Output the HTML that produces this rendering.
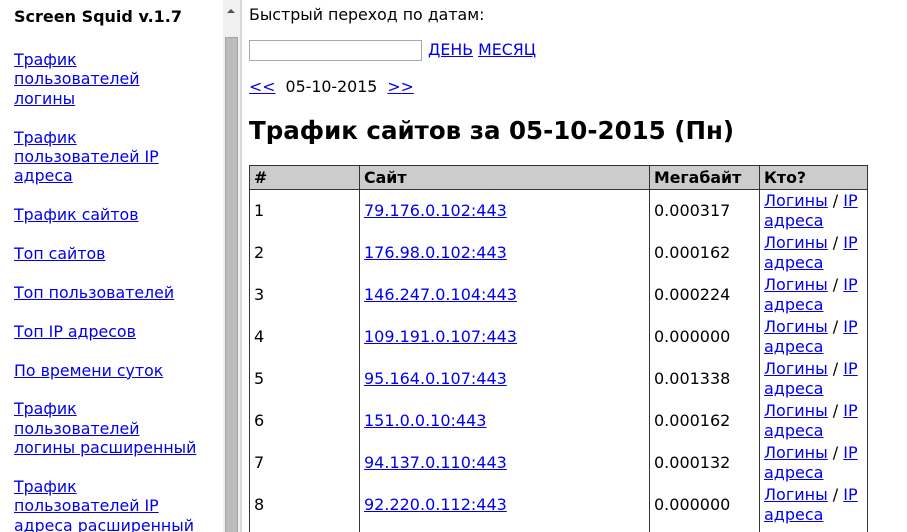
<!DOCTYPE html>
<html style="width:907px;height:532px;overflow:hidden"><head><meta charset="utf-8"><style>
*{margin:0;padding:0;box-sizing:border-box}
body{width:907px;height:532px;overflow:hidden;background:#fff;font-family:"DejaVu Sans","Liberation Sans",sans-serif;font-size:15.8px;color:#000}
#wrap{position:relative;width:907px;height:532px;overflow:hidden}
a{color:#0000ee;text-decoration:underline}
#side{position:absolute;left:0;top:0;width:223px;height:532px;padding:4px 0 0 14px;line-height:19.4px}
#side h3{font-size:16px;font-weight:bold;margin-bottom:20px;line-height:26px;margin-top:0}
#sb{position:absolute;left:223px;top:0;width:17px;height:532px;background:#f0f0f0}
#sb .th{position:absolute;left:2px;top:37px;width:13px;height:500px;background:#bcbcbc;border:1px solid #a5a5a5}
#sb .ar{position:absolute;left:4px;top:9px;width:0;height:0;border-left:4px solid transparent;border-right:4px solid transparent;border-bottom:4px solid #505050}
#edge{position:absolute;left:240px;top:0;width:2px;height:532px;background:#d8d8d8}
#main{position:absolute;left:249px;top:0;width:650px;height:532px;overflow:hidden}
.l1{position:absolute;top:5px;left:0;white-space:nowrap}
.inp{position:absolute;top:40px;left:0;width:173px;height:21px;border:1px solid #a9a9a9}
.dm{position:absolute;top:40px;left:179px}
.dt{position:absolute;top:77px;left:0;white-space:nowrap}
h1{position:absolute;top:116px;left:0;font-size:24.5px;font-weight:bold;white-space:nowrap}
table{position:absolute;top:165px;left:0;border-collapse:collapse;width:619px;border:1px solid #333;font-size:16px}
th{background:#ccc;text-align:left;font-weight:bold;height:24px;padding:0 4px;border:1px solid #333;font-size:15.8px}
td{border-left:1px solid #333;border-right:1px solid #333;padding:1px 4px;height:42px;vertical-align:middle;line-height:20px}
</style></head><body><div id="wrap">
<div id="side">
<h3>Screen Squid v.1.7</h3>
<a href="#">Трафик<br>пользователей<br>логины</a><br><br>
<a href="#">Трафик<br>пользователей IP<br>адреса</a><br><br>
<a href="#">Трафик сайтов</a><br><br>
<a href="#">Топ сайтов</a><br><br>
<a href="#">Топ пользователей</a><br><br>
<a href="#">Топ IP адресов</a><br><br>
<a href="#">По времени суток</a><br><br>
<a href="#">Трафик<br>пользователей<br>логины расширенный</a><br><br>
<a href="#">Трафик<br>пользователей IP<br>адреса расширенный</a>
</div>
<div id="sb"><div class="ar"></div><div class="th"></div></div>
<div id="edge"></div>
<div id="main">
<div class="l1">Быстрый переход по датам:</div>
<div class="inp"></div>
<div class="dm"><a href="#">ДЕНЬ</a> <a href="#">МЕСЯЦ</a></div>
<div class="dt"><a href="#">&lt;&lt;</a>&nbsp; 05-10-2015 &nbsp;<a href="#">&gt;&gt;</a></div>
<h1>Трафик сайтов за 05-10-2015 (Пн)</h1>
<table>
<tr><th style="width:110px">#</th><th style="width:290px">Сайт</th><th style="width:110px">Мегабайт</th><th>Кто?</th></tr>
<tr><td>1</td><td><a href="#">79.176.0.102:443</a></td><td>0.000317</td><td><a href="#">Логины</a> / <a href="#">IP</a><br><a href="#">адреса</a></td></tr>
<tr><td>2</td><td><a href="#">176.98.0.102:443</a></td><td>0.000162</td><td><a href="#">Логины</a> / <a href="#">IP</a><br><a href="#">адреса</a></td></tr>
<tr><td>3</td><td><a href="#">146.247.0.104:443</a></td><td>0.000224</td><td><a href="#">Логины</a> / <a href="#">IP</a><br><a href="#">адреса</a></td></tr>
<tr><td>4</td><td><a href="#">109.191.0.107:443</a></td><td>0.000000</td><td><a href="#">Логины</a> / <a href="#">IP</a><br><a href="#">адреса</a></td></tr>
<tr><td>5</td><td><a href="#">95.164.0.107:443</a></td><td>0.001338</td><td><a href="#">Логины</a> / <a href="#">IP</a><br><a href="#">адреса</a></td></tr>
<tr><td>6</td><td><a href="#">151.0.0.10:443</a></td><td>0.000162</td><td><a href="#">Логины</a> / <a href="#">IP</a><br><a href="#">адреса</a></td></tr>
<tr><td>7</td><td><a href="#">94.137.0.110:443</a></td><td>0.000132</td><td><a href="#">Логины</a> / <a href="#">IP</a><br><a href="#">адреса</a></td></tr>
<tr><td>8</td><td><a href="#">92.220.0.112:443</a></td><td>0.000000</td><td><a href="#">Логины</a> / <a href="#">IP</a><br><a href="#">адреса</a></td></tr>
<tr><td>&nbsp;</td><td></td><td></td><td></td></tr>
</table>
</div>
</div></body></html>
